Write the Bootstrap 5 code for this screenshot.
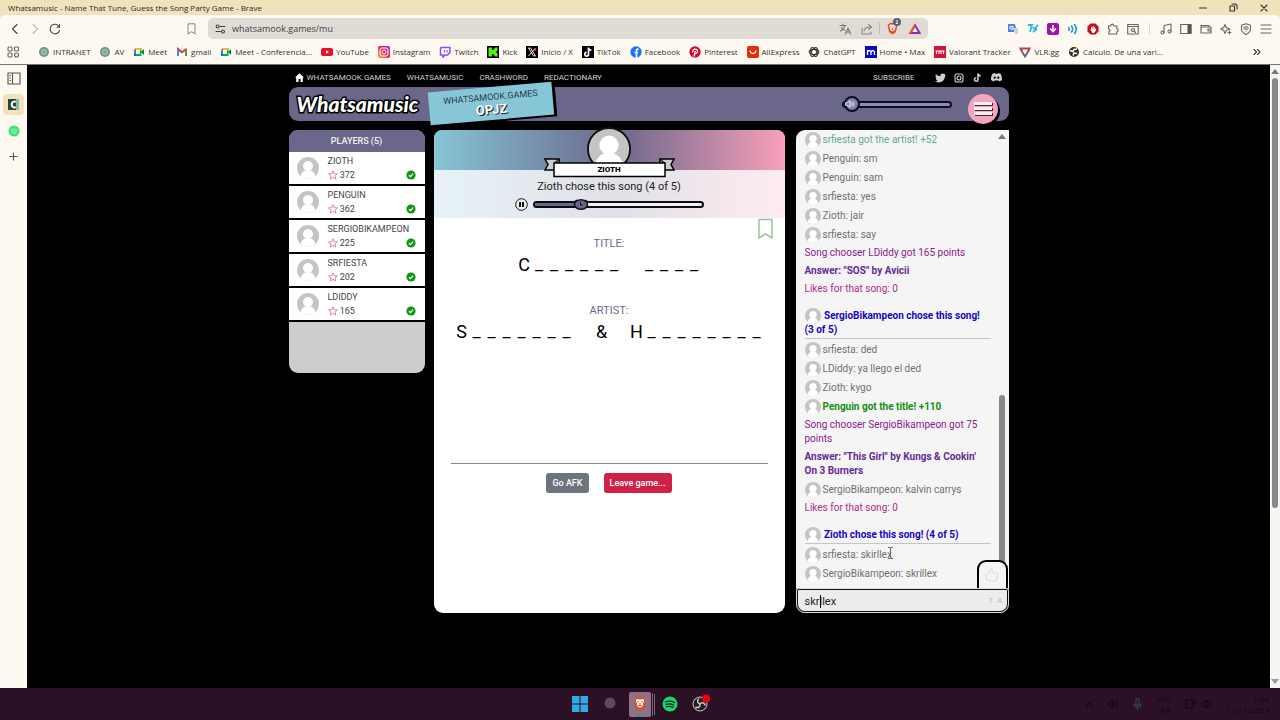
<!DOCTYPE html>
<html lang="en">
<head>
<meta charset="utf-8">
<meta name="viewport" content="width=device-width, initial-scale=1">
<title>Whatsamusic - Name That Tune, Guess the Song Party Game</title>
<link href="https://cdn.jsdelivr.net/npm/bootstrap@5.3.0/dist/css/bootstrap.min.css" rel="stylesheet">
<style>
:root{--plum:#6b678a;--teal:#86c6d6;--rose:#f49fb9;--cream:#fdf9f1;--ui:"Open Sans","Noto Sans",sans-serif;--game:Roboto,Inter,sans-serif}
body{font-family:var(--game);font-size:10px;line-height:14px;background:#000;color:#444}
button{border:0;background:none;padding:0;color:inherit}
svg{display:block;flex:none}
a{color:inherit;text-decoration:none}
.ico{fill:none;stroke:currentColor;stroke-width:1.1;stroke-linecap:round;stroke-linejoin:round}
/* browser frame */
.titlebar{height:15px;background:#efe2bc;font-family:var(--ui);font-size:8px;line-height:16px;color:#2b2b26;padding-left:8px}
.winbtns{gap:22px;padding-right:12px;color:#333}
.chrome{background:var(--cream);border-radius:5px 5px 0 0;font-family:var(--ui);color:#444;border-bottom:1px solid #77756b}
.toolbar{height:25px;padding:3px 8px 1px 9px}
.navbtns{width:178px;gap:8px}
.omni{height:21px;background:#e0dbd5;border-radius:5px;width:720px;padding:0 7px;gap:6px}
.omni input{border:0;background:none;outline:0;font-size:9px;padding:0;color:#444;height:21px}
.tools{gap:8px}
.bookmarks{height:24px;padding-left:7px;font-size:8px;color:#333}
.bmlist{width:1125px;margin-left:19px}
.bmlist a{gap:3px;white-space:nowrap}
.vline{width:1px;height:11px;background:#ddd4c6}
.side{width:27px;background:var(--cream);color:#555;gap:5px;padding-top:3px}
.side .tab{width:21px;height:21px;border-radius:4px}
.side .active-tab{background:#efe2bc}
.bar{background:#f7f5f2;width:10px}
.bar .thumb{width:6px;height:430px;border-radius:3px;background:#8a8a8a}
.arr{border:4px solid transparent;width:0;height:0}
.arr-up{border-top:0;border-bottom:5px solid #777}
.arr-down{border-bottom:0;border-top:5px solid #999}
/* game */
.game{max-width:720px}
.topnav{height:22px;font-size:8px;color:#d0d0d0;padding:3px 7px 0 6px}
.topnav .sec{margin-right:16px}
.head{height:34px;background:var(--plum);border-radius:9px;padding-left:8px}
.logo{font:italic 900 21px/34px Lato,sans-serif;color:#fff;-webkit-text-stroke:3px #000;paint-order:stroke fill;width:132px}
.plate{width:124px;height:33px;transform:rotate(-5deg);background:var(--teal);box-shadow:3px 2px 0 #000;color:#2c3c4c;font-size:9px;line-height:12px;text-align:center;padding-top:4px;margin-top:-2px}
.plate b{display:block;color:#fff;font-size:13px;line-height:13px;text-shadow:1px 1px 0 #222}
.vol{-webkit-appearance:none;appearance:none;width:110px;height:16px;background:none;margin:0}
.vol::-webkit-slider-runnable-track{height:7px;border:2px solid #0c0c22;border-radius:4px;background:#918cb4}
.vol::-webkit-slider-thumb{-webkit-appearance:none;width:16px;height:16px;margin-top:-7px;border-radius:50%;border:2px solid #0c0c22;background:#8580a8}
.volwrap{margin-right:16px}
.volwrap svg{position:absolute;left:3px;top:3px;color:#eef;pointer-events:none}
.burger{width:30px;height:30px;border-radius:50%;background:#f6a3bf;box-shadow:2px 2px 0 #000;margin-right:11px;margin-top:9px;gap:2px}
.burger i{width:18px;height:3px;background:#f3eef0;box-shadow:1px 1px 0 #333}
.board{display:grid;grid-template-columns:136px minmax(0,1fr) 213px;column-gap:9px;margin-top:9px}
.players{border-radius:9px;background:#ccc;padding-bottom:51px;font-size:9px}
.players h2{font-size:9px;line-height:22px;background:var(--plum);color:#f1f0f6;margin:0;text-align:center;font-weight:500}
.players li{height:34px;background:#fff;border-bottom:2px solid #000;padding:0 9px 0 8px;gap:9px}
.stage{border-radius:9px;background:#fff;margin-right:2px}
.stagehead{height:88px;background:linear-gradient(#fff0 40px,#fffc 40px),linear-gradient(90deg,var(--teal),var(--plum) 52%,#f8a0ba)}
.face{top:-4px;left:50%;margin-left:-23px}
.ribbon{top:28px;left:50%;margin-left:-65px}
.ribbon-name{top:33px;left:0;right:0;text-align:center;font-size:8px;color:#000;font-weight:900}
.chose{padding-top:50px;font-size:11px;color:#222;text-align:center}
.track{width:171px;height:7px;border:2px solid #0c0c16;border-radius:4px;background:#f4eff4}
.fill{background:var(--plum)}
.track svg{margin:-4px 0 0 -8px}
.lab{font-size:11px;color:var(--plum);text-align:center}
.word{gap:20px;font-size:18px;line-height:22px;color:#000;font-family:Roboto,sans-serif}
.word span{display:grid;grid-auto-flow:column;grid-auto-columns:15px;justify-items:center}
.word i:not(.fst-normal){margin-top:-1px;font-style:normal}
.rule{border-top:1px solid #888;margin:0 17px}
.act{height:20px;border-radius:3px;color:#fff;font-size:9px;line-height:20px;font-weight:500;padding:0 6px}
.chat{border-radius:9px 0 9px 9px;background:#f6f5f6}
.log{padding:0 0 5px 9px;width:195px;color:#707070}
.log p{margin:0;padding:2px 0}
.log .msg{height:19px;padding:0;display:flex;align-items:center;gap:2px;white-space:nowrap}
.log .pick{margin:9px 0 1px;padding:2px 0 1px;border-bottom:1px solid #c5c5c5;color:#1506c0;font-weight:700}
.pick svg{display:inline-block;margin:-3px 1px -3px 0;vertical-align:middle}
.bar2{width:13px;padding-top:4px}
.bar2 .thumb{width:6px;height:193px;border-radius:3px 3px 0 0;background:#888}
.like{right:1px;bottom:25px;width:31px;height:28px;background:#f4f4f4;border:2px solid #000;border-bottom:0;border-radius:9px 9px 0 0;color:#ddd}
.entry{height:25px;border:2px solid #111;border-radius:3px 3px 9px 9px;outline:1px solid #ddd;outline-offset:-1px;background:#ececec}
.entry input{border:0;outline:0;background:none;padding:2px 0 0 7px;font-size:11px;color:#222;height:21px}
.caret{left:22px;top:5px;width:1px;height:13px;background:#000}
.ibeam{left:91px;bottom:54px}
.taskbar{height:32px;background:#2c1026;color:#130711;font-family:var(--ui);font-size:8px;line-height:11px}
.tasks{gap:8px}
.tasks button{width:22px;display:grid;place-items:center}
.tasks svg{overflow:visible}
.taskright{right:11px;top:5px;gap:14px}
</style>
</head>
<body class="d-flex flex-column min-vh-100">
<svg width="0" height="0" class="position-absolute" aria-hidden="true">
<defs>
<symbol id="av" viewBox="0 0 22 22"><clipPath id="c"><circle cx="11" cy="11" r="11"/></clipPath><g clip-path="url(#c)"><path fill="#c4c4c4" d="M0 0h22v22H0z"/><circle cx="11" cy="9" r="5" fill="#fff"/><path fill="#fff" d="M3.500 22c0-6 3-9 7.500-9s7.500 3 7.500 9z"/></g></symbol>
<symbol id="star" viewBox="0 0 10 10"><path d="M5 .8l1.200 2.900 3.200.2L7 6l.8 3L5 7.400 2.200 9 3 6 .6 3.900l3.200-.2z" fill="none" stroke="#d9779f" stroke-width=".9"/></symbol>
<symbol id="ok" viewBox="0 0 10 10"><circle cx="5" cy="5" r="4.600" fill="#119512"/><path d="M2.900 5.100l1.500 1.500 2.800-3" fill="none" stroke="#fff" stroke-width="1.200"/></symbol>
<symbol id="meet" viewBox="0 0 12 12"><path fill="#00ac47" d="M3 2h5.500v8H3z"/><path fill="#2684fc" d="M1 4h2v4H1z"/><path fill="#ea4335" d="M1 4l2-2v2z"/><path fill="#ffba00" d="M3 2h5v2H3z"/><path fill="#0066da" d="M1 8h2v2H1z"/><path fill="#fff" d="M3 4h4v4H3z"/><path fill="#00832d" d="M8 6l3-3v6z"/></symbol>
<symbol id="ring" viewBox="0 0 12 12"><circle cx="6" cy="6" r="5" fill="#4d9fa8"/><circle cx="6" cy="6" r="3.200" fill="#c8ad6a"/><circle cx="6" cy="6" r="1.600" fill="#6bb0b8"/></symbol>
<symbol id="tiktok" viewBox="0 0 12 12"><path d="M6.500 1.500V8.200A1.900 1.900 0 1 1 4.600 6.300M6.500 1.500c.2 1.800 1.200 2.600 2.900 2.700" fill="none" stroke="currentColor" stroke-width="1.700"/></symbol>
<symbol id="spot" viewBox="0 0 16 16"><circle cx="8" cy="8" r="7.500" fill="#1ed760"/><path d="M3.500 5.800c3-.9 6.500-.6 9 .8M4 8.300c2.600-.7 5.500-.4 7.700.8M4.500 10.700c2.200-.6 4.400-.4 6.300.7" fill="none" stroke="#123" stroke-width="1.300" stroke-linecap="round"/></symbol>
<symbol id="spotlite" viewBox="0 0 12 12"><circle cx="6" cy="6" r="5.500" fill="#3be477"/><path d="M3 4.500c2-.6 4.500-.4 6.200.5M3.300 6.300c2-.5 3.800-.3 5.200.5M3.700 8c1.500-.4 3-.2 4.200.4" fill="none" stroke="#a8f5c4" stroke-width=".9" stroke-linecap="round"/></symbol>
<symbol id="brave" viewBox="0 0 14 16"><path fill="#f04a22" d="M4 1h6l1.500 1.500L13 2.800l-.5 2.200.3 1-1.800 6.500L7 15.300 3 12.500 1.200 6l.3-1L1 2.800l1.500-.3z"/><path fill="#fff" d="M7 3.500l3.200-.4 1 2-1.400 3 .3 1.300L7 11.800 3.900 9.400l.3-1.300-1.400-3 1-2z"/><path d="M4.200 5.500l1.800.8M9.800 5.500L8 6.300M7 7v2M5.500 9.500h3" stroke="#f04a22" fill="none"/></symbol>
<symbol id="snd" viewBox="0 0 12 12"><path class="ico" d="M1 4.500h2l3-2.500v8L3 7.500H1zM7.800 4.300c1 1 1 2.400 0 3.400M9.300 2.800c2 2 2 4.400 0 6.400"/></symbol>
<symbol id="bookm" viewBox="0 0 16 22"><path d="M1.500 1.500h13v18.500L8 16l-6.500 4z" fill="none" stroke="currentColor" stroke-width="1.500" stroke-linejoin="round"/></symbol>
</defs>
</svg>

<header>
  <div class="titlebar d-flex justify-content-between">
    <span>Whatsamusic - Name That Tune, Guess the Song Party Game - Brave</span>
    <div class="winbtns d-flex align-items-center">
      <button aria-label="Minimize"><svg width="8" height="8"><path class="ico" d="M.5 4h7"/></svg></button>
      <button aria-label="Restore"><svg width="9" height="9"><path class="ico" d="M1 3h4.500v5H1zM3 1h3.500l1.500 1.500V6"/></svg></button>
      <button aria-label="Close"><svg width="8" height="8"><path class="ico" d="M1 1l6 6M7 1L1 7"/></svg></button>
    </div>
  </div>
  <div style="background:#efe2bc"><div class="chrome">
    <div class="toolbar d-flex align-items-center">
      <div class="navbtns d-flex align-items-center">
        <button aria-label="Back"><svg width="12" height="12"><path class="ico" d="M8 1.500L3.500 6 8 10.500"/></svg></button>
        <button aria-label="Forward" style="color:#bbb"><svg width="12" height="12"><path class="ico" d="M4 1.500L8.500 6 4 10.500"/></svg></button>
        <button aria-label="Reload"><svg width="12" height="12"><path class="ico" d="M10.500 7.500A4.800 4.800 0 1 1 10 3.500M10.500 1.500V4.200H8"/></svg></button>
      </div>
      <button aria-label="Bookmark" class="me-2" style="color:#666"><svg width="9" height="12" viewBox="0 0 16 22"><use href="#bookm"/></svg></button>
      <div class="omni d-flex align-items-center ms-1">
        <svg width="11" height="10"><path class="ico" d="M5 2.500h5M1 7.500h4.500"/><circle class="ico" cx="2.700" cy="2.500" r="1.500"/><circle class="ico" cx="8" cy="7.500" r="1.500"/></svg>
        <input class="flex-fill" aria-label="Address" value="whatsamook.games/mu">
        <svg class="me-1" width="12" height="12" style="color:#777"><path class="ico" d="M1 2.500h6M4 1v1.500M6 2.500C5.500 5 3 7 1.500 8M2.500 4.500C3.500 6 5 7 6 7.500M6.500 11L9 5l2.500 6M7.500 9h3"/></svg>
        <svg width="12" height="12" style="color:#888"><path class="ico" d="M1 5v6h9V9M3 8c.5-3 3-4 6-4M7.500 1.500L10.500 4 7.500 6.500"/></svg>
        <span class="vline" style="background:#bbb"></span>
        <span class="position-relative me-1"><svg width="13" height="13"><use href="#brave"/></svg><svg class="position-absolute" style="left:7px;top:-4px" width="8" height="8"><circle cx="4" cy="4" r="4" fill="#5a6070"/><path d="M2.800 3q1-1.300 2 0L3 5.500h2.200" stroke="#fff" fill="none" stroke-width=".8"/></svg></span>
        <svg width="12" height="12"><path d="M6 2.200L10.500 10H1.500z" fill="#fff" stroke="#8c2aa0" stroke-width="2"/><path d="M6 2.200L1.500 10" stroke="#ff5028" stroke-width="2"/></svg>
      </div>
      <div class="tools d-flex align-items-center ms-auto" style="color:#666">
        <svg width="12" height="12"><path fill="#4a86e8" d="M1 1h7l2 8H1z"/><path fill="#ccd3df" d="M6 5h5v6H8z"/><path d="M3 3.500h3v2.500H3z" stroke="#fff" fill="none"/></svg>
        <svg width="12" height="12"><path d="M1 2h4L3 9M6 4l1.500 2L11 2M6 9l4-3" stroke="#26b6e8" stroke-width="1.800" fill="none"/></svg>
        <svg width="12" height="12"><rect width="12" height="12" rx="2" fill="#a112a8"/><path d="M6 2v6M3 5.500l3 3 3-3" stroke="#fff" stroke-width="1.600" fill="none"/></svg>
        <svg width="12" height="12" style="color:#2295d8"><path class="ico" d="M2 4.500v3M4.500 3c1.500 2 1.500 4 0 6M7.500 1.500c2.500 3 2.500 6 0 9" style="stroke-width:1.600"/></svg>
        <svg width="12" height="12"><path d="M3.500.5h5l3 3v5l-3 3h-5l-3-3v-5z" fill="#c40f1f"/><path d="M4.500 6V4M6 6V3M7.500 6V4M4 6h4.500v1.500L7 9.500H5.500z" stroke="#fff" fill="#fff"/></svg>
        <svg width="12" height="12"><path class="ico" d="M1.500 3h2.300c0-2.500 3-2.500 3 0h3v2.800c2 .2 2 2.800 0 3V11h-8V8.500c1.800-.3 1.800-2.300-.3-2.500z"/></svg>
        <svg width="12" height="12"><path class="ico" d="M.7 1.500h10.500v9.500H.7zM.7 3.500h10.500M7 8l1.500 1.500"/><circle class="ico" cx="6" cy="7" r="1.500"/></svg>
        <span class="vline" style="margin:0 2px"></span>
        <svg width="12" height="12"><path class="ico" d="M4 9.500V2.500L11 1v7.500"/><circle class="ico" cx="2.500" cy="9.500" r="1.500"/><circle class="ico" cx="9.500" cy="8.500" r="1.500"/></svg>
        <svg width="12" height="12"><path class="ico" d="M.7 1.500h10.500v9H.7z"/><path d="M7.500 1.500h3.500v9H7.500z" fill="#555"/></svg>
        <svg width="12" height="12"><path class="ico" d="M1 2.500h8v1.500M1 2.500V10h10V4H2M11 6H8v2h3"/></svg>
        <svg width="12" height="12"><path class="ico" d="M5 1.500L6.200 4.500 10 6 6.500 7.300 5 10.500 3.700 7.300.7 6 3.700 4.500zM9.500 8v3M8 9.500h3"/></svg>
        <svg width="12" height="12"><path class="ico" d="M6 .8l4.500 1.500V6c0 2.500-2 4.300-4.500 5.400C3.500 10.300 1.500 8.500 1.500 6V2.300zM3.700 4.800q2.300-2 4.600 0M4.700 6.300q1.300-1 2.600 0M6 8v.2"/></svg>
        <svg width="12" height="12"><path class="ico" d="M1 2h10M1 6h10M1 10h10"/></svg>
      </div>
    </div>
    <nav class="bookmarks d-flex align-items-center" aria-label="Bookmarks">
      <svg width="12" height="12" style="color:#666"><g class="ico"><rect x="1" y="1" width="4" height="4" rx="1"/><rect x="7.500" y="1" width="4" height="4" rx="1"/><rect x="1" y="7" width="4" height="4" rx="1"/><rect x="7.500" y="7" width="4" height="4" rx="2"/></g></svg>
      <div class="bmlist d-flex justify-content-between">
        <a href="#" class="d-flex align-items-center"><svg width="12" height="12"><use href="#ring"/></svg>INTRANET</a>
        <a href="#" class="d-flex align-items-center"><svg width="12" height="12"><use href="#ring"/></svg>AV</a>
        <a href="#" class="d-flex align-items-center"><svg width="12" height="12"><use href="#meet"/></svg>Meet</a>
        <a href="#" class="d-flex align-items-center"><svg width="12" height="12"><path d="M2 10V3l4 3.500" fill="none" stroke="#4285f4" stroke-width="2"/><path d="M10 10V3" stroke="#34a853" stroke-width="2"/><path d="M1.500 2.800L6 6.300l4.500-3.500" fill="none" stroke="#ea4335" stroke-width="2"/></svg>gmail</a>
        <a href="#" class="d-flex align-items-center"><svg width="12" height="12"><use href="#meet"/></svg>Meet - Conferencia...</a>
        <a href="#" class="d-flex align-items-center"><svg width="12" height="12"><rect y="2" width="12" height="8" rx="2" fill="#e6122d"/><path fill="#fff" d="M5 4.200v3.600L8 6z"/></svg>YouTube</a>
        <a href="#" class="d-flex align-items-center"><svg width="12" height="12"><linearGradient id="ig" x1="0" y1="1" x2="1" y2="0"><stop stop-color="#fdb02f"/><stop offset=".5" stop-color="#e6205f"/><stop offset="1" stop-color="#a32bc4"/></linearGradient><rect width="12" height="12" rx="2" fill="url(#ig)"/><rect x="2" y="2" width="8" height="8" rx="2" fill="none" stroke="#fff"/><circle cx="6" cy="6" r="2" fill="none" stroke="#fff"/></svg>Instagram</a>
        <a href="#" class="d-flex align-items-center"><svg width="12" height="12"><path d="M2 1.500h9v5L8.500 9H6l-2 2V9H1.500V3z" fill="#fff" stroke="#9147ff" stroke-width="1.500"/><path d="M5.500 4v2.500M8 4v2.500" stroke="#9147ff" stroke-width="1.200"/></svg>Twitch</a>
        <a href="#" class="d-flex align-items-center"><svg width="12" height="12"><path d="M0 0h12v12H0z"/><path fill="#4df01c" d="M1.500 1.500h3.500v2.500h1.500V2.500H8v-1h2.500v3L9 6l1.500 1.500v3H8V9.500H6.500V8H5v2.500H1.500z"/></svg>Kick</a>
        <a href="#" class="d-flex align-items-center"><svg width="12" height="12"><path d="M0 0h12v12H0z"/><path d="M2.500 2h2l5 8h-2zM9.500 2L2.500 10" stroke="#eee" fill="none"/><circle cx="9" cy="3.500" r="1.500" fill="#d33"/></svg>Inicio / X</a>
        <a href="#" class="d-flex align-items-center"><svg width="12" height="12" style="color:#fff"><path d="M0 0h12v12H0z"/><use href="#tiktok"/></svg>TikTok</a>
        <a href="#" class="d-flex align-items-center"><svg width="12" height="12"><circle cx="6" cy="6" r="5.700" fill="#1877f2"/><path d="M8.500 3.200C7 3 6.500 3.500 6.500 5v7M4.500 6.500H8" stroke="#fff" stroke-width="1.600" fill="none"/></svg>Facebook</a>
        <a href="#" class="d-flex align-items-center"><svg width="12" height="12"><circle cx="6" cy="6" r="5.700" fill="#d00b31"/><path d="M4 6.500c-1.500-4 4.800-4.500 4.500-1.200C8.300 8 6 8 5.800 6.800M6.300 4.800L5 10.500" stroke="#fff" stroke-width="1.200" fill="none"/></svg>Pinterest</a>
        <a href="#" class="d-flex align-items-center"><svg width="12" height="12"><rect width="12" height="12" rx="2" fill="#e0310e"/><path d="M3 4.500c.5 4 5.500 4 6 0" stroke="#fff" fill="none" stroke-width="1.200"/></svg>AliExpress</a>
        <a href="#" class="d-flex align-items-center"><svg width="12" height="12"><g class="ico"><ellipse cx="6" cy="6" rx="4.800" ry="2.600"/><ellipse cx="6" cy="6" rx="4.800" ry="2.600" transform="rotate(60 6 6)"/><ellipse cx="6" cy="6" rx="4.800" ry="2.600" transform="rotate(120 6 6)"/></g></svg>ChatGPT</a>
        <a href="#" class="d-flex align-items-center"><svg width="12" height="12"><path fill="#0a0ab8" d="M0 0h12v12H0z"/><path d="M2.500 9V4M2.500 6q1.800-3 3.500 0v3M6 6q1.800-3 3.500 0v3" stroke="#fff" stroke-width="1.300" fill="none"/></svg>Home • Max</a>
        <a href="#" class="d-flex align-items-center"><svg width="12" height="12"><rect y="0" width="12" height="12" fill="#d3143f"/><path d="M1.500 5h9M2.500 5v3M5 5v3M7 5v3M9.500 5v3" stroke="#fff" fill="none"/></svg>Valorant Tracker</a>
        <a href="#" class="d-flex align-items-center"><svg width="12" height="12"><path fill="#c63a43" d="M0 1.500h12L10.500 5H8L9 3.500H3L4 5H1.500z"/><path d="M2.500 5L6 10.500 9.500 5" stroke="#5a6275" stroke-width="1.800" fill="none"/></svg>VLR.gg</a>
        <a href="#" class="d-flex align-items-center"><svg width="12" height="12"><circle cx="6" cy="6" r="5" fill="#333"/><path d="M2 4.500l3 1 1-2 3-.5M5 9.500l1-2.500 3 .5" stroke="#fff" stroke-width="1.500" fill="none"/></svg>Calculo. De una vari...</a>
      </div>
      <svg class="ms-auto me-3" width="12" height="12"><path class="ico" d="M2 3.500L4.500 6 2 8.500M5.500 3.500L8 6 5.500 8.500"/></svg>
    </nav>
  </div></div>
</header>

<div class="d-flex flex-fill">
  <aside class="side d-flex flex-column align-items-center">
    <button class="tab d-grid" style="place-items:center" aria-label="Panel"><svg width="14" height="13"><path class="ico" d="M1 1h12v11H1zM5.500 1v11M2.800 3.500h.7M2.800 6h.7M2.800 8.500h.7"/></svg></button>
    <button class="tab active-tab d-grid" style="place-items:center" aria-label="Whatsamusic"><svg width="11" height="11"><path fill="#27463f" d="M0 0h11v11H0z"/><path fill="#85b9a9" d="M8 0h3v11H8z"/><path d="M8 2.800A3 3 0 1 0 8 8.200" stroke="#fff" stroke-width="2" fill="none"/></svg></button>
    <button class="tab d-grid" style="place-items:center" aria-label="Spotify"><svg width="12" height="12"><use href="#spotlite"/></svg></button>
    <button class="tab d-grid" style="place-items:center" aria-label="New tab"><svg width="9" height="9"><path class="ico" d="M4.500 1v7M1 4.500h7"/></svg></button>
  </aside>

  <div class="flex-fill">
    <div class="game mx-auto">
      <nav class="topnav d-flex align-items-center" aria-label="Games">
        <a href="#" class="sec d-flex align-items-center"><svg width="9" height="9" style="margin-right:3px"><path fill="#fff" d="M4.500.3L9 4.500H7.800V9H5.500V6h-2v3H1.200V4.500H0z"/></svg>WHATSAMOOK.GAMES</a>
        <a href="#" class="sec">WHATSAMUSIC</a>
        <a href="#" class="sec">CRASHWORD</a>
        <a href="#">REDACTIONARY</a>
        <a href="#" class="sec ms-auto">SUBSCRIBE</a>
        <a href="#" aria-label="Twitter" class="me-2 ps-1"><svg width="11" height="10"><path fill="currentColor" d="M11 1.800l-1 1C10 7 7 9.500 3.500 9.500 2 9.500 1 9.200 0 8.600c1.200 0 2.200-.3 3-1C2 7.500 1.300 7 1 6h1C1 5.500.5 4.800.5 3.700l.9.300C.5 3.200.3 2 .9.900 2 2.300 3.600 3.100 5.400 3.200 5 .5 8-.3 9.300 1.200l1.300-.5-.7 1.200z"/></svg></a>
        <a href="#" aria-label="Instagram" class="me-2"><svg width="10" height="10"><rect class="ico" x="1" y="1" width="8" height="8" rx="2"/><circle class="ico" cx="5" cy="5" r="2"/></svg></a>
        <a href="#" aria-label="TikTok" class="me-2"><svg width="11" height="11" viewBox="0 0 12 12"><use href="#tiktok"/></svg></a>
        <a href="#" aria-label="Discord"><svg width="11" height="9"><path fill="currentColor" d="M3.700 0L1.500.8C.4 2.500 0 4.500 0 7l2.700 1.600.8-1.200h4l.8 1.200L11 7c0-2.500-.4-4.500-1.500-6.200L7.300 0l-.5.8H4.200z"/><circle cx="3.700" cy="4.700" r="1.100"/><circle cx="7.300" cy="4.700" r="1.100"/></svg></a>
      </nav>
      <div class="head d-flex align-items-center">
        <span class="logo">Whatsamusic</span>
        <div class="plate">WHATSAMOOK.GAMES<b>OPJZ</b></div>
        <div class="volwrap position-relative ms-auto d-flex">
          <input class="vol" type="range" min="0" max="100" value="0" aria-label="Volume"><svg width="10" height="10"><use href="#snd"/></svg>
        </div>
        <button class="burger d-flex flex-column align-items-center justify-content-center" aria-label="Menu"><i></i><i></i><i></i></button>
      </div>

      <main class="board">
        <section class="players overflow-hidden align-self-start">
          <h2>PLAYERS (5)</h2>
          <ul class="list-unstyled m-0">
            <li class="d-flex align-items-center"><svg width="22" height="22"><use href="#av"/></svg><div class="flex-fill">ZIOTH<div class="d-flex align-items-center"><svg width="10" height="10"><use href="#star"/></svg>&nbsp;372<svg class="ms-auto" width="10" height="10"><use href="#ok"/></svg></div></div></li>
            <li class="d-flex align-items-center"><svg width="22" height="22"><use href="#av"/></svg><div class="flex-fill">PENGUIN<div class="d-flex align-items-center"><svg width="10" height="10"><use href="#star"/></svg>&nbsp;362<svg class="ms-auto" width="10" height="10"><use href="#ok"/></svg></div></div></li>
            <li class="d-flex align-items-center"><svg width="22" height="22"><use href="#av"/></svg><div class="flex-fill">SERGIOBIKAMPEON<div class="d-flex align-items-center"><svg width="10" height="10"><use href="#star"/></svg>&nbsp;225<svg class="ms-auto" width="10" height="10"><use href="#ok"/></svg></div></div></li>
            <li class="d-flex align-items-center"><svg width="22" height="22"><use href="#av"/></svg><div class="flex-fill">SRFIESTA<div class="d-flex align-items-center"><svg width="10" height="10"><use href="#star"/></svg>&nbsp;202<svg class="ms-auto" width="10" height="10"><use href="#ok"/></svg></div></div></li>
            <li class="d-flex align-items-center"><svg width="22" height="22"><use href="#av"/></svg><div class="flex-fill">LDIDDY<div class="d-flex align-items-center"><svg width="10" height="10"><use href="#star"/></svg>&nbsp;165<svg class="ms-auto" width="10" height="10"><use href="#ok"/></svg></div></div></li>
          </ul>
        </section>

        <section class="stage position-relative">
          <div class="stagehead rounded-top-3 position-relative">
            <svg class="face position-absolute" width="46" height="46" viewBox="-1 -1 24 24"><use href="#av" width="22" height="22"/><circle cx="11" cy="11" r="11" fill="none" stroke="#111"/></svg>
            <svg class="ribbon position-absolute" width="131" height="20"><path d="M1 1h14v11H1l3-5.500zM130 1h-14v11h14l-3-5.500z" fill="#ccc" stroke="#000" stroke-width="1.500"/><path d="M10 5l5-4v4zM121 5l-5-4v4z" fill="#777" stroke="#000"/><path d="M10 5h111v13.500H10z" fill="#fff" stroke="#000" stroke-width="1.500"/></svg>
            <div class="ribbon-name position-absolute">ZIOTH</div>
            <div class="chose">Zioth chose this song (4 of 5)</div>
            <div class="d-flex align-items-center justify-content-center mt-1" style="gap:5px">
              <button aria-label="Pause"><svg width="13" height="13"><circle cx="6.500" cy="6.500" r="5.800" fill="#eee" stroke="#111"/><path d="M5 4v5M8 4v5" stroke="#111" stroke-width="2"/></svg></button>
              <div class="track d-flex" role="progressbar" aria-label="Song time" aria-valuenow="28" aria-valuemin="0" aria-valuemax="100"><div class="fill" style="width:28%"></div><svg width="16" height="11"><path d="M1 3l3-2M15 3l-3-2" stroke="#111" stroke-width="1.500"/><ellipse cx="8" cy="5.500" rx="6.500" ry="4.700" fill="#6b678a" stroke="#111" stroke-width="1.500"/><path d="M7.500 3v3H10" stroke="#111" fill="none"/></svg></div>
            </div>
          </div>
          <button class="position-absolute" style="right:11px;top:88px;color:#94c79a" aria-label="Save song"><svg width="17" height="22" viewBox="0 0 16 22"><use href="#bookm"/></svg></button>
          <div class="lab" style="padding-top:19px">TITLE:</div>
          <div class="word d-flex justify-content-center" style="margin-top:3px"><span><i class="fst-normal">C</i><i>_</i><i>_</i><i>_</i><i>_</i><i>_</i><i>_</i></span><span><i>_</i><i>_</i><i>_</i><i>_</i></span></div>
          <div class="lab" style="margin-top:28px">ARTIST:</div>
          <div class="word d-flex justify-content-center" style="margin-top:3px"><span><i class="fst-normal">S</i><i>_</i><i>_</i><i>_</i><i>_</i><i>_</i><i>_</i><i>_</i></span><span><i class="fst-normal">&amp;</i></span><span><i class="fst-normal">H</i><i>_</i><i>_</i><i>_</i><i>_</i><i>_</i><i>_</i><i>_</i><i>_</i></span></div>
          <div class="rule" style="margin-top:120px"></div>
          <div class="d-flex justify-content-center" style="gap:15px;padding-top:9px">
            <button class="act" style="background:#6c757d">Go AFK</button>
            <button class="act" style="background:#cf2148">Leave game...</button>
          </div>
        </section>

        <section class="chat position-relative">
          <div class="d-flex justify-content-between">
            <div class="log">
              <p class="msg" style="color:#61a895"><svg width="16" height="16"><use href="#av"/></svg>srfiesta got the artist! +52</p>
              <p class="msg"><svg width="16" height="16"><use href="#av"/></svg>Penguin: sm</p>
              <p class="msg"><svg width="16" height="16"><use href="#av"/></svg>Penguin: sam</p>
              <p class="msg"><svg width="16" height="16"><use href="#av"/></svg>srfiesta: yes</p>
              <p class="msg"><svg width="16" height="16"><use href="#av"/></svg>Zioth: jair</p>
              <p class="msg"><svg width="16" height="16"><use href="#av"/></svg>srfiesta: say</p>
              <p style="color:#8a1a8c">Song chooser LDiddy got 165 points</p>
              <p class="fw-bold" style="color:#652a96">Answer: "SOS" by Avicii</p>
              <p style="color:#b02a8c">Likes for that song: 0</p>
              <p class="pick"><svg width="16" height="16"><use href="#av"/></svg> SergioBikampeon chose this song! (3 of 5)</p>
              <p class="msg"><svg width="16" height="16"><use href="#av"/></svg>srfiesta: ded</p>
              <p class="msg"><svg width="16" height="16"><use href="#av"/></svg>LDiddy: ya llego el ded</p>
              <p class="msg"><svg width="16" height="16"><use href="#av"/></svg>Zioth: kygo</p>
              <p class="msg fw-bold" style="color:#128f10"><svg width="16" height="16"><use href="#av"/></svg>Penguin got the title! +110</p>
              <p style="color:#8a1a8c">Song chooser SergioBikampeon got 75 points</p>
              <p class="fw-bold" style="color:#652a96">Answer: "This Girl" by Kungs &amp; Cookin' On 3 Burners</p>
              <p class="msg"><svg width="16" height="16"><use href="#av"/></svg>SergioBikampeon: kalvin carrys</p>
              <p style="color:#b02a8c">Likes for that song: 0</p>
              <p class="pick"><svg width="16" height="16"><use href="#av"/></svg> Zioth chose this song! (4 of 5)</p>
              <p class="msg"><svg width="16" height="16"><use href="#av"/></svg>srfiesta: skirllex</p>
              <p class="msg"><svg width="16" height="16"><use href="#av"/></svg>SergioBikampeon: skrillex</p>
            </div>
            <div class="bar2 d-flex flex-column align-items-center justify-content-between"><span class="arr arr-up"></span><span class="thumb"></span></div>
          </div>
          <button class="like position-absolute d-grid" style="place-items:center" aria-label="Like"><svg width="14" height="16"><path class="ico" d="M1 7h2.500L6 1.500c2 0 1.500 2.500 1 4.500h4.500c2 0 1.500 2 .8 2.500.7.800.3 1.800-.4 2.200.3.900-.3 1.600-.8 1.800.2 1.500-1 1.500-2 1.500H5L3.500 13H1z"/></svg></button>
          <svg class="ibeam position-absolute" width="7" height="12"><path d="M1 .5h2l.5.5.5-.5h2M3.500 1v10M1 11.500h2l.5-.5.5.5h2" stroke="#666" fill="none"/></svg>
          <div class="entry position-relative d-flex align-items-center">
            <input class="w-100" type="text" aria-label="Guess" value="skrllex"><span class="caret position-absolute"></span>
            <span class="pe-1" style="font-size:8px;color:#bbb;white-space:nowrap">T&nbsp; A</span>
          </div>
        </section>
      </main>
    </div>
  </div>
  <div class="bar d-flex flex-column align-items-center py-1"><span class="arr arr-up mb-1"></span><span class="thumb"></span><span class="arr arr-down mt-auto"></span></div>
</div>

<footer class="taskbar position-relative d-flex justify-content-center align-items-center">
  <div class="tasks d-flex align-items-center">
    <button aria-label="Start"><svg width="20" height="16"><path fill="#35a9e6" d="M2 0h7.500v7.500H2zM10.500 0H18v7.500h-7.500zM2 8.500h7.500V16H2zM10.500 8.500H18V16h-7.500z"/></svg></button>
    <button aria-label="Search"><svg width="20" height="16"><circle cx="10" cy="7" r="5.500" fill="#5b4b5b"/></svg></button>
    <button aria-label="Brave"><svg width="22" height="25"><rect width="22" height="25" rx="2" fill="#8c7287"/><path d="M23.500 1v23M25.500 2v21" stroke="#7a6076"/><svg x="4" y="4" width="14" height="16"><use href="#brave"/></svg><path d="M7 24h9" stroke="#3c8ca0" stroke-width="2"/></svg></button>
    <button aria-label="Spotify"><svg width="18" height="16"><use href="#spot"/></svg></button>
    <button aria-label="OBS"><svg width="18" height="20"><circle cx="9" cy="10" r="7" fill="#222" stroke="#ccc"/><path d="M9 10c-3-1-3-4-1-5.500M9 10c2-2.500 5-1 5 1.500M9 10c.5 3-2 4.500-4.500 3" stroke="#ccc" fill="none" stroke-width="1.500"/><circle cx="15" cy="4.500" r="4" fill="#e8040c"/></svg></button>
  </div>
  <div class="taskright position-absolute d-flex align-items-center">
    <svg width="8" height="12"><path class="ico" d="M1 8l3-3 3 3"/></svg>
    <svg width="12" height="12"><use href="#snd"/></svg>
    <svg width="9" height="12" style="color:#364a5c"><path class="ico" d="M3 1h3v6H3zM1 6c0 4 7 4 7 0M4.500 9v2.500"/></svg>
    <span class="text-center">ESP<br>LAA</span>
    <svg width="12" height="12"><path class="ico" d="M1 2h7v8H1zM8 4h3v3"/></svg>
    <svg width="12" height="12" style="margin-left:-10px"><use href="#snd"/></svg>
    <span class="text-end">1:04<br>12/11/2023</span>
  </div>
</footer>
<script src="https://cdn.jsdelivr.net/npm/bootstrap@5.3.0/dist/js/bootstrap.bundle.min.js"></script>
</body>
</html>
